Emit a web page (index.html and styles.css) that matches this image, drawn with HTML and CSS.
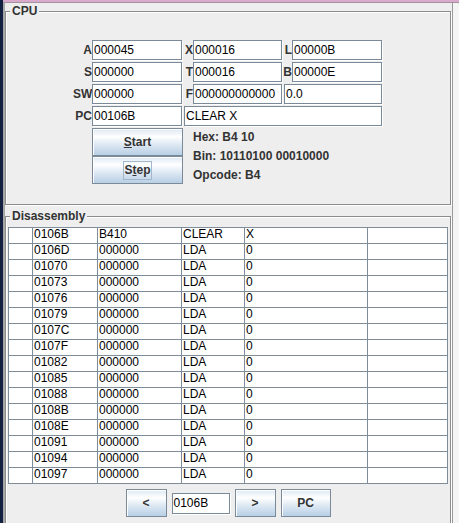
FILE: index.html
```html
<!DOCTYPE html>
<html>
<head>
<meta charset="utf-8">
<link rel="stylesheet" href="styles.css">
</head>
<body>
<div class="app">
  <div class="edge-left"></div>
  <div class="frame">
    <div class="topbar"></div>
    <div class="frame-body">
      <div class="edge-left2"></div>
      <div class="content">
        <section class="group cpu">
          <span class="group-title">CPU</span>
          <div class="regs">
            <span class="lbl">A</span><div class="field">000045</div>
            <span class="lbl">X</span><div class="field">000016</div>
            <span class="lbl">L</span><div class="field">00000B</div>

            <span class="lbl">S</span><div class="field">000000</div>
            <span class="lbl">T</span><div class="field">000016</div>
            <span class="lbl">B</span><div class="field">00000E</div>

            <span class="lbl">SW</span><div class="field">000000</div>
            <span class="lbl">F</span><div class="field">000000000000</div>
            <div class="field span2">0.0</div>

            <span class="lbl">PC</span><div class="field">00106B</div>
            <div class="field span4">CLEAR X</div>

            <div class="btn-stack">
              <button class="btn"><span><u>S</u>tart</span></button>
              <button class="btn"><span class="focus">S<u>t</u>ep</span></button>
            </div>
            <div class="info">
              <div class="info-line">Hex: B4 10</div>
              <div class="info-line">Bin: 10110100 00010000</div>
              <div class="info-line">Opcode: B4</div>
            </div>
          </div>
        </section>

        <section class="group dis">
          <span class="group-title">Disassembly</span>
          <table class="grid">
            <colgroup>
              <col class="c1"><col class="c2"><col class="c3"><col class="c4"><col class="c5"><col class="c6">
            </colgroup>
            <tbody>
              <tr><td></td><td>0106B</td><td>B410</td><td>CLEAR</td><td>X</td><td></td></tr>
              <tr><td></td><td>0106D</td><td>000000</td><td>LDA</td><td>0</td><td></td></tr>
              <tr><td></td><td>01070</td><td>000000</td><td>LDA</td><td>0</td><td></td></tr>
              <tr><td></td><td>01073</td><td>000000</td><td>LDA</td><td>0</td><td></td></tr>
              <tr><td></td><td>01076</td><td>000000</td><td>LDA</td><td>0</td><td></td></tr>
              <tr><td></td><td>01079</td><td>000000</td><td>LDA</td><td>0</td><td></td></tr>
              <tr><td></td><td>0107C</td><td>000000</td><td>LDA</td><td>0</td><td></td></tr>
              <tr><td></td><td>0107F</td><td>000000</td><td>LDA</td><td>0</td><td></td></tr>
              <tr><td></td><td>01082</td><td>000000</td><td>LDA</td><td>0</td><td></td></tr>
              <tr><td></td><td>01085</td><td>000000</td><td>LDA</td><td>0</td><td></td></tr>
              <tr><td></td><td>01088</td><td>000000</td><td>LDA</td><td>0</td><td></td></tr>
              <tr><td></td><td>0108B</td><td>000000</td><td>LDA</td><td>0</td><td></td></tr>
              <tr><td></td><td>0108E</td><td>000000</td><td>LDA</td><td>0</td><td></td></tr>
              <tr><td></td><td>01091</td><td>000000</td><td>LDA</td><td>0</td><td></td></tr>
              <tr><td></td><td>01094</td><td>000000</td><td>LDA</td><td>0</td><td></td></tr>
              <tr><td></td><td>01097</td><td>000000</td><td>LDA</td><td>0</td><td></td></tr>
            </tbody>
          </table>
          <div class="nav">
            <button class="btn nav-btn">&lt;</button>
            <div class="field nav-field">0106B</div>
            <button class="btn nav-btn">&gt;</button>
            <button class="btn nav-btn pc">PC</button>
          </div>
        </section>
      </div>
      <div class="edge-right"></div>
    </div>
  </div>
</div>
</body>
</html>
```

FILE: styles.css
```css
* { box-sizing: border-box; }

html, body {
  margin: 0;
  padding: 0;
}

body {
  width: 459px;
  height: 523px;
  overflow: hidden;
  background: #eeeeee;
  font-family: "Liberation Sans", Arial, sans-serif;
  font-size: 12px;
  color: #333333;
}

.app {
  display: flex;
  height: 523px;
}

.edge-left {
  width: 3px;
  flex: none;
  background: #14203f;
}

.frame {
  flex: 1;
  display: flex;
  flex-direction: column;
  min-width: 0;
}

.topbar {
  height: 3px;
  flex: none;
  background: #d9aacb;
  border-bottom: 1px solid #a4929f;
}

.frame-body {
  flex: 1;
  display: flex;
  min-height: 0;
}

.edge-left2 {
  width: 2px;
  flex: none;
  background: #a8a8a8;
}

.content {
  flex: 1;
  min-width: 0;
  padding-top: 8px;
}

.edge-right {
  width: 7px;
  flex: none;
  background: #f4f4f4;
  border-left: 1px solid #9a9a9a;
}

/* titled, etched group */
.group {
  position: relative;
  margin-right: 1px;
  border: 1px solid #8c8c8c;
  box-shadow: 1px 1px 0 #ffffff, inset 1px 1px 0 #ffffff;
}

.group-title {
  position: absolute;
  top: -8px;
  left: 4px;
  padding: 0 2px;
  background: #eeeeee;
  font-weight: bold;
  line-height: 14px;
  color: #333333;
}

.cpu {
  padding: 28px 0 20px;
  display: flex;
  justify-content: center;
}

.regs {
  display: grid;
  grid-template-columns: 19px 91px 10px 90px 9px 91px;
  grid-template-rows: 21px 21px 21px 21px 56px;
  row-gap: 1px;
}

.lbl {
  font-weight: bold;
  text-align: right;
  line-height: 21px;
  color: #333333;
  white-space: nowrap;
}

.field {
  width: calc(100% - 1px);
  height: 20px;
  background: #ffffff;
  border: 1px solid #7a8a99;
  box-shadow: 1px 1px 0 #ffffff;
  padding-left: 1px;
  line-height: 18px;
  color: #000000;
  white-space: nowrap;
  overflow: hidden;
}

.span2 {
  grid-column: span 2;
  margin-left: 1px;
  width: calc(100% - 2px);
}

.span4 {
  grid-column: span 4;
  margin-left: 1px;
  width: calc(100% - 2px);
}

.btn-stack {
  grid-column: 2;
  display: flex;
  flex-direction: column;
  margin-top: 0;
}

.btn {
  margin: 0;
  padding: 0;
  font-family: "Liberation Sans", Arial, sans-serif;
  font-size: 12px;
  font-weight: bold;
  color: #333333;
  border: 1px solid #7a8a99;
  box-shadow: inset 1px 1px 0 #ffffff;
  background: linear-gradient(to bottom, #dde8f3 0%, #ffffff 30%, #dde8f3 60%, #b8cfe5 100%);
  display: flex;
  align-items: center;
  justify-content: center;
}

.btn-stack .btn {
  width: 91px;
  height: 28px;
}

.btn u {
  text-decoration: underline;
  text-underline-offset: 1px;
}

.focus {
  border: 1px solid #a3b8cc;
  padding: 1px 0;
  line-height: 15px;
}

.info {
  grid-column: 4 / span 3;
  display: flex;
  flex-direction: column;
}

.info-line {
  flex: 1;
  display: flex;
  align-items: center;
  font-weight: bold;
  color: #333333;
  white-space: nowrap;
}

/* disassembly */
.dis {
  margin-top: 11px;
  padding: 10px 2px 20px;
}

.grid {
  table-layout: fixed;
  width: 440px;
  border-collapse: separate;
  border-spacing: 0;
  border-top: 1px solid #7f8c99;
  border-left: 1px solid #7f8c99;
  background: #ffffff;
}

.c1 { width: 24px; }
.c2 { width: 65px; }
.c3 { width: 84px; }
.c4 { width: 63px; }
.c5 { width: 123px; }
.c6 { width: 80px; }

.grid td {
  height: 16px;
  padding: 0 0 0 1px;
  border-right: 1px solid #7f8c99;
  border-bottom: 1px solid #7f8c99;
  font-size: 12px;
  line-height: 13px;
  vertical-align: top;
  color: #000000;
  white-space: nowrap;
  overflow: hidden;
}

.nav {
  display: flex;
  justify-content: center;
  align-items: center;
  gap: 5px;
  margin-top: 5px;
}

.nav-btn {
  width: 41px;
  height: 28px;
}

.nav-btn.pc {
  width: 50px;
}

.nav-field {
  width: 58px;
  height: 21px;
  line-height: 19px;
}
```
